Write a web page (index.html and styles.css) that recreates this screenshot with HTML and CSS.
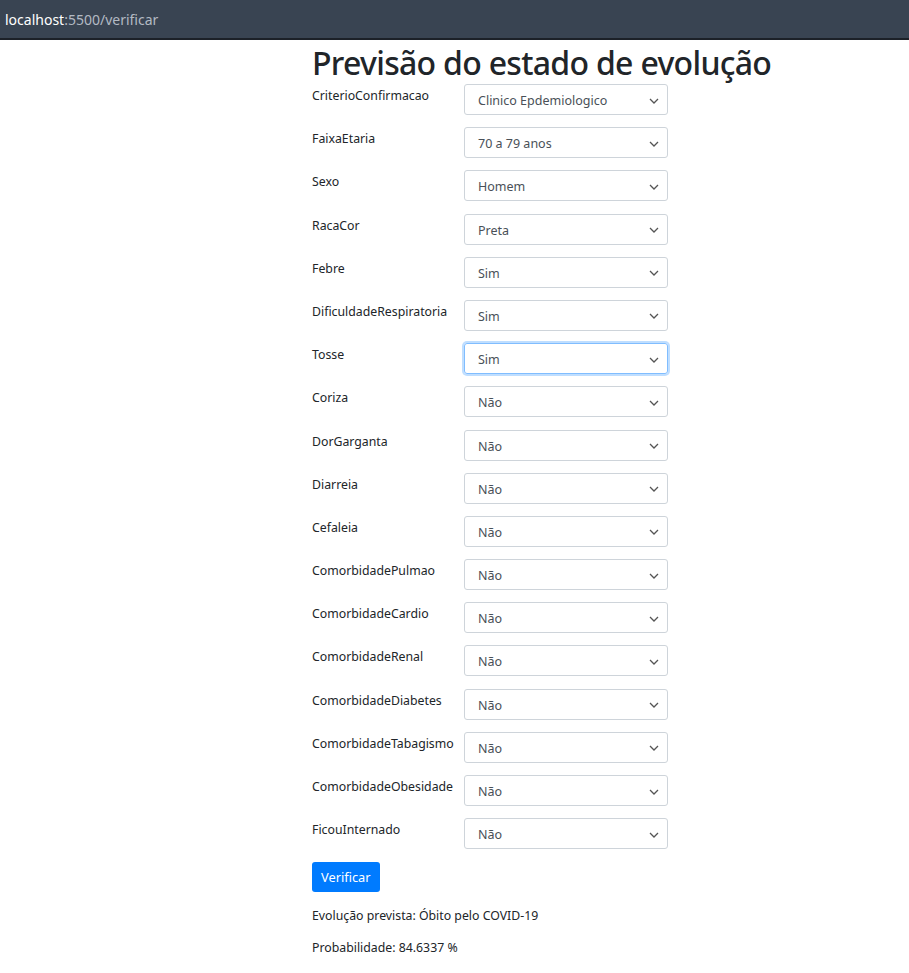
FILE: index.html
```html
<!DOCTYPE html>
<html lang="pt">
<head>
<meta charset="utf-8">
<title>Verificar</title>
<link rel="stylesheet" href="styles.css">
</head>
<body>
<div class="urlbar"><span class="host">localhost</span><span class="path">:5500/verificar</span></div>
<main class="page">
  <h1 class="title">Previsão do estado de evolução</h1>
  <form class="form">
    <div class="row"><label class="lbl">CriterioConfirmacao</label><div class="sel"><span>Clinico Epdemiologico</span><svg class="chev" viewBox="0 0 10 6"><path d="M1 1l4 4 4-4"/></svg></div></div>
    <div class="row"><label class="lbl">FaixaEtaria</label><div class="sel"><span>70 a 79 anos</span><svg class="chev" viewBox="0 0 10 6"><path d="M1 1l4 4 4-4"/></svg></div></div>
    <div class="row"><label class="lbl">Sexo</label><div class="sel"><span>Homem</span><svg class="chev" viewBox="0 0 10 6"><path d="M1 1l4 4 4-4"/></svg></div></div>
    <div class="row"><label class="lbl">RacaCor</label><div class="sel"><span>Preta</span><svg class="chev" viewBox="0 0 10 6"><path d="M1 1l4 4 4-4"/></svg></div></div>
    <div class="row"><label class="lbl">Febre</label><div class="sel"><span>Sim</span><svg class="chev" viewBox="0 0 10 6"><path d="M1 1l4 4 4-4"/></svg></div></div>
    <div class="row"><label class="lbl">DificuldadeRespiratoria</label><div class="sel"><span>Sim</span><svg class="chev" viewBox="0 0 10 6"><path d="M1 1l4 4 4-4"/></svg></div></div>
    <div class="row"><label class="lbl">Tosse</label><div class="sel focus"><span>Sim</span><svg class="chev" viewBox="0 0 10 6"><path d="M1 1l4 4 4-4"/></svg></div></div>
    <div class="row"><label class="lbl">Coriza</label><div class="sel"><span>Não</span><svg class="chev" viewBox="0 0 10 6"><path d="M1 1l4 4 4-4"/></svg></div></div>
    <div class="row"><label class="lbl">DorGarganta</label><div class="sel"><span>Não</span><svg class="chev" viewBox="0 0 10 6"><path d="M1 1l4 4 4-4"/></svg></div></div>
    <div class="row"><label class="lbl">Diarreia</label><div class="sel"><span>Não</span><svg class="chev" viewBox="0 0 10 6"><path d="M1 1l4 4 4-4"/></svg></div></div>
    <div class="row"><label class="lbl">Cefaleia</label><div class="sel"><span>Não</span><svg class="chev" viewBox="0 0 10 6"><path d="M1 1l4 4 4-4"/></svg></div></div>
    <div class="row"><label class="lbl">ComorbidadePulmao</label><div class="sel"><span>Não</span><svg class="chev" viewBox="0 0 10 6"><path d="M1 1l4 4 4-4"/></svg></div></div>
    <div class="row"><label class="lbl">ComorbidadeCardio</label><div class="sel"><span>Não</span><svg class="chev" viewBox="0 0 10 6"><path d="M1 1l4 4 4-4"/></svg></div></div>
    <div class="row"><label class="lbl">ComorbidadeRenal</label><div class="sel"><span>Não</span><svg class="chev" viewBox="0 0 10 6"><path d="M1 1l4 4 4-4"/></svg></div></div>
    <div class="row"><label class="lbl">ComorbidadeDiabetes</label><div class="sel"><span>Não</span><svg class="chev" viewBox="0 0 10 6"><path d="M1 1l4 4 4-4"/></svg></div></div>
    <div class="row"><label class="lbl">ComorbidadeTabagismo</label><div class="sel"><span>Não</span><svg class="chev" viewBox="0 0 10 6"><path d="M1 1l4 4 4-4"/></svg></div></div>
    <div class="row"><label class="lbl">ComorbidadeObesidade</label><div class="sel"><span>Não</span><svg class="chev" viewBox="0 0 10 6"><path d="M1 1l4 4 4-4"/></svg></div></div>
    <div class="row"><label class="lbl">FicouInternado</label><div class="sel"><span>Não</span><svg class="chev" viewBox="0 0 10 6"><path d="M1 1l4 4 4-4"/></svg></div></div>
    <button type="button" class="btn">Verificar</button>
  </form>
  <p class="result">Evolução prevista: Óbito pelo COVID-19</p>
  <p class="result">Probabilidade: 84.6337 %</p>
</main>
</body>
</html>
```
FILE: styles.css
```css
* { box-sizing: border-box; }
html, body { margin: 0; padding: 0; background: #fff; }
body {
  font-family: "Noto Sans", "Open Sans", "Liberation Sans", sans-serif;
  color: #212529;
  font-size: 13px;
}
.urlbar {
  height: 40px;
  background: #394452;
  border-bottom: 2px solid #1c2128;
  display: flex;
  align-items: center;
  padding-left: 5px;
  font-size: 14px;
}
.host { color: #ffffff; }
.path { color: #b3bac3; }
.page { padding-left: 312px; }
.title {
  margin: 0;
  padding-top: 2px;
  font-size: 32px;
  font-weight: 500;
  letter-spacing: -0.7px;
  line-height: 42px;
  color: #212529;
}
.form { display: flex; flex-direction: column; }
.row {
  display: flex;
  align-items: flex-start;
  height: 43.2px;
}
.lbl {
  width: 152px;
  flex: none;
  font-size: 12.3px;
  line-height: 18px;
  padding-top: 3px;
}
.sel {
  width: 204px;
  height: 31px;
  border: 1px solid #ced4da;
  border-radius: 3px;
  display: flex;
  align-items: center;
  justify-content: space-between;
  padding: 2px 8px 0 13px;
  font-size: 12.5px;
  color: #495057;
}
.sel.focus {
  border-color: #80bdff;
  box-shadow: 0 0 0 2px rgba(0, 123, 255, 0.25);
}
.chev {
  width: 10px;
  height: 6px;
  fill: none;
  stroke: #555;
  stroke-width: 1.3;
}
.btn {
  align-self: flex-start;
  margin-top: 1px;
  height: 30px;
  padding: 0 9px;
  border: none;
  border-radius: 3px;
  background: #007bff;
  color: #fff;
  font-family: inherit;
  font-size: 12.8px;
}
.result {
  margin: 15px 0 0;
  font-size: 12.3px;
  line-height: 18px;
}
.result + .result { margin-top: 14px; }
```
